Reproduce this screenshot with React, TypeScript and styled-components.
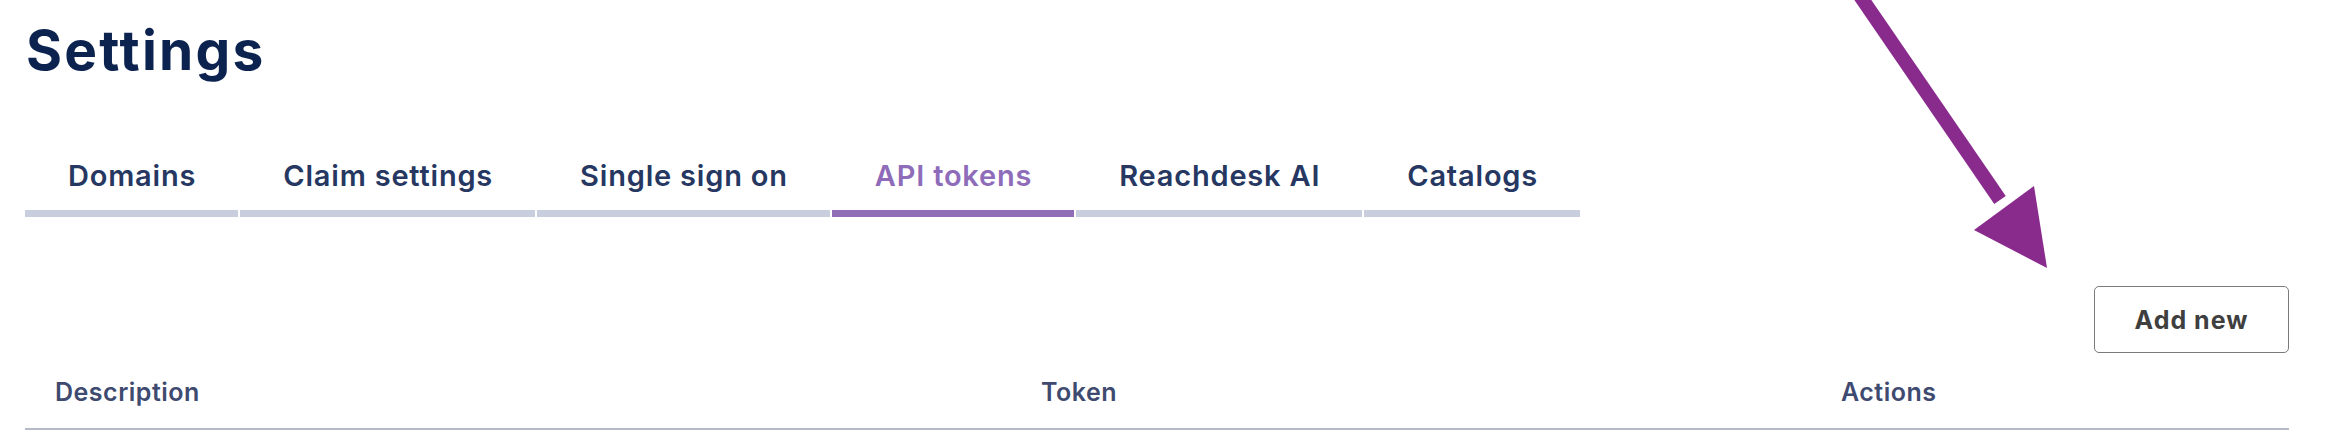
import styled, { createGlobalStyle } from "styled-components";

const GlobalStyle = createGlobalStyle`
  body {
    margin: 0;
    background: #ffffff;
    font-family: "Inter", "Liberation Sans", sans-serif;
  }
`;

const Page = styled.div`
  position: relative;
  width: 2326px;
  height: 434px;
  box-sizing: border-box;
  padding: 12px 37px 0 25px;
  overflow: hidden;
`;

const Title = styled.h1`
  margin: 0 0 0 1px;
  font-size: 55px;
  font-weight: 700;
  line-height: 76px;
  color: #0c2350;
  letter-spacing: 2.2px;
`;

const TabList = styled.div`
  display: flex;
  gap: 2px;
  margin-top: 68px;
`;

const Tab = styled.div<{ $active?: boolean }>`
  padding: 0 42px 14px 43px;
  font-size: 29px;
  font-weight: 600;
  line-height: 40px;
  letter-spacing: 0.8px;
  color: ${(p) => (p.$active ? "#8e6cba" : "#263862")};
  border-bottom: 7px solid ${(p) => (p.$active ? "#906db7" : "#c8cedd")};
`;

const Toolbar = styled.div`
  display: flex;
  justify-content: flex-end;
  margin-top: 69px;
`;

const AddButton = styled.button`
  width: 195px;
  height: 67px;
  background: #ffffff;
  border: 1px solid #7b7b7b;
  border-radius: 5px;
  font-family: "Inter", "Liberation Sans", sans-serif;
  font-size: 25px;
  font-weight: 700;
  letter-spacing: 1px;
  color: #3f3f3f;
`;

const TableHead = styled.div`
  display: grid;
  grid-template-columns: 986px 800px 1fr;
  margin-top: 19px;
  border-bottom: 2px solid #b4bac8;
`;

const HeadCell = styled.div`
  padding: 0 30px 16px;
  font-size: 25px;
  font-weight: 600;
  line-height: 40px;
  letter-spacing: 0.5px;
  color: #3e4a6f;
`;

const Arrow = styled.svg`
  position: absolute;
  left: 1800px;
  top: 0;
`;

const tabs = [
  "Domains",
  "Claim settings",
  "Single sign on",
  "API tokens",
  "Reachdesk AI",
  "Catalogs",
];

export default function App() {
  return (
    <>
      <GlobalStyle />
      <Page>
        <Title>Settings</Title>
        <TabList>
          {tabs.map((t) => (
            <Tab key={t} $active={t === "API tokens"}>
              {t}
            </Tab>
          ))}
        </TabList>
        <Toolbar>
          <AddButton>Add new</AddButton>
        </Toolbar>
        <TableHead>
          <HeadCell>Description</HeadCell>
          <HeadCell>Token</HeadCell>
          <HeadCell>Actions</HeadCell>
        </TableHead>
        <Arrow width="300" height="300" viewBox="0 0 300 300">
          <line x1="56" y1="-10" x2="200" y2="200" stroke="#892b8d" strokeWidth="14" />
          <polygon points="174,230 234,186 247,268" fill="#892b8d" />
        </Arrow>
      </Page>
    </>
  );
}
